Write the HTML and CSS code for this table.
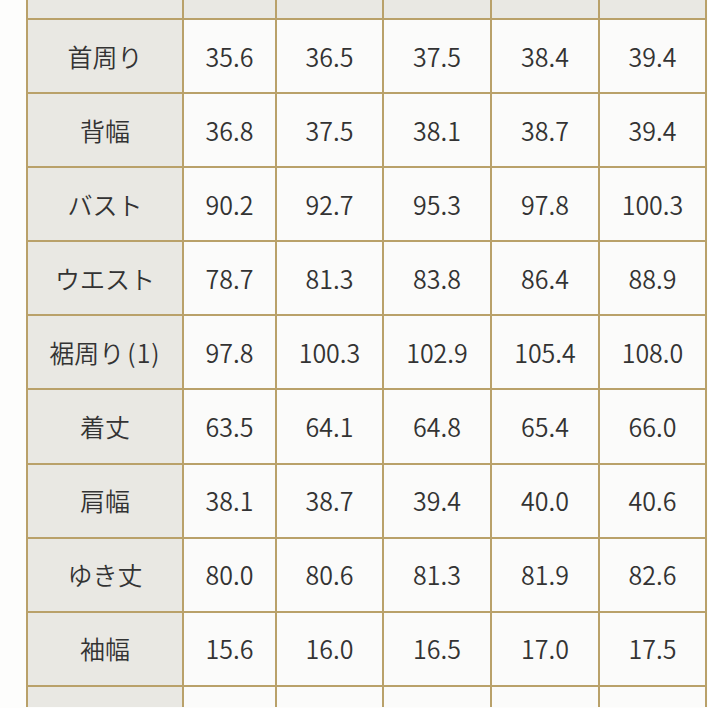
FILE: index.html
```html
<!DOCTYPE html>
<html lang="ja">
<head>
<meta charset="utf-8">
<link rel="stylesheet" href="styles.css">
</head>
<body>
<div class="page">
  <div class="grid">
    <div class="cell head"></div><div class="cell head"></div><div class="cell head"></div><div class="cell head"></div><div class="cell head"></div><div class="cell head"></div>

    <div class="cell label">首周り</div><div class="cell">35.6</div><div class="cell">36.5</div><div class="cell">37.5</div><div class="cell">38.4</div><div class="cell">39.4</div>
    <div class="cell label">背幅</div><div class="cell">36.8</div><div class="cell">37.5</div><div class="cell">38.1</div><div class="cell">38.7</div><div class="cell">39.4</div>
    <div class="cell label">バスト</div><div class="cell">90.2</div><div class="cell">92.7</div><div class="cell">95.3</div><div class="cell">97.8</div><div class="cell">100.3</div>
    <div class="cell label">ウエスト</div><div class="cell">78.7</div><div class="cell">81.3</div><div class="cell">83.8</div><div class="cell">86.4</div><div class="cell">88.9</div>
    <div class="cell label">裾周り<span class="paren">(1)</span></div><div class="cell">97.8</div><div class="cell">100.3</div><div class="cell">102.9</div><div class="cell">105.4</div><div class="cell">108.0</div>
    <div class="cell label">着丈</div><div class="cell">63.5</div><div class="cell">64.1</div><div class="cell">64.8</div><div class="cell">65.4</div><div class="cell">66.0</div>
    <div class="cell label">肩幅</div><div class="cell">38.1</div><div class="cell">38.7</div><div class="cell">39.4</div><div class="cell">40.0</div><div class="cell">40.6</div>
    <div class="cell label">ゆき丈</div><div class="cell">80.0</div><div class="cell">80.6</div><div class="cell">81.3</div><div class="cell">81.9</div><div class="cell">82.6</div>
    <div class="cell label">袖幅</div><div class="cell">15.6</div><div class="cell">16.0</div><div class="cell">16.5</div><div class="cell">17.0</div><div class="cell">17.5</div>

    <div class="cell label"></div><div class="cell"></div><div class="cell"></div><div class="cell"></div><div class="cell"></div><div class="cell"></div>
  </div>
</div>
</body>
</html>
```

FILE: styles.css
```css
html, body {
  margin: 0;
  padding: 0;
  background: #fdfdfc;
}
body {
  width: 708px;
  height: 708px;
  overflow: hidden;
  font-family: "Noto Sans CJK JP", "Noto Sans", sans-serif;
  color: #333333;
}
.page {
  padding-left: 26px;
}
.grid {
  width: 681px;
  box-sizing: border-box;
  display: grid;
  grid-template-columns: 154px 91px 105px 106px 106px 105px;
  grid-template-rows: 18px repeat(9, 72.1px) 20px;
  gap: 2px;
  padding: 0 2px;
  background: #b9a16a;
}
.cell {
  background: #fbfbfa;
  display: flex;
  align-items: center;
  justify-content: center;
  font-size: 25px;
  font-weight: 350;
  line-height: 1;
}
.paren {
  letter-spacing: 1px;
  margin-left: 3px;
}
.head,
.label {
  background: #e9e8e3;
}
```
